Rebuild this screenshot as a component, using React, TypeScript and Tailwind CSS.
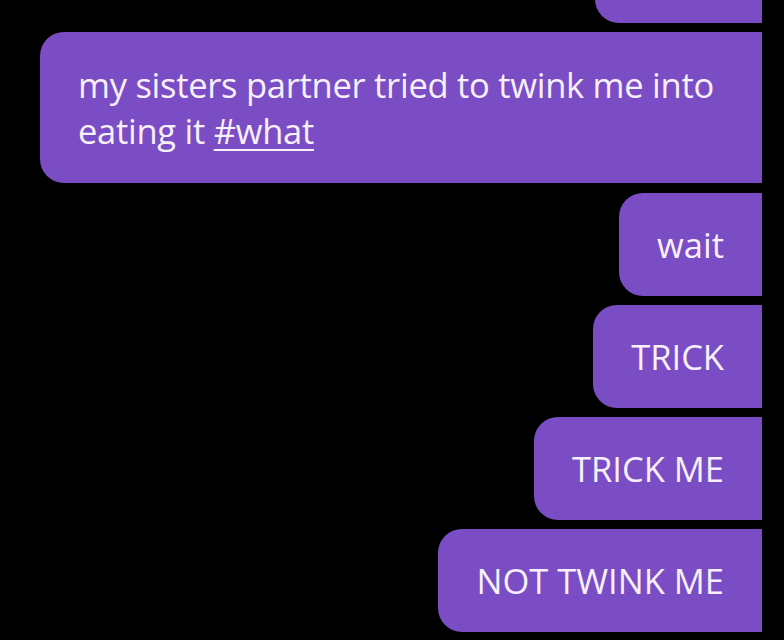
import React from "react";

const font = { fontFamily: '"Open Sans", "Noto Sans", sans-serif' };

function Bubble({ children }: { children: React.ReactNode }) {
  return (
    <div className="flex h-[103px] items-center rounded-l-[24px] bg-[#7a4dc5] pl-[38px] pr-[38px] text-[34.5px] leading-[46px] text-[#f7f0fb]">
      {children}
    </div>
  );
}

export default function App() {
  return (
    <div className="h-[640px] w-[784px] overflow-hidden bg-black" style={font}>
      <div className="flex flex-col items-end gap-[9px] pr-[22px]">
        <div className="-mt-[80px] h-[103px] w-[167px] rounded-l-[24px] bg-[#7a4dc5]" />
        <div className="w-[722px] rounded-l-[24px] bg-[#7a4dc5] pb-[29px] pl-[38px] pr-[20px] pt-[30px] text-[34.5px] leading-[46px] tracking-[-0.27px] text-[#f7f0fb]">
          <span className="whitespace-nowrap">my sisters partner tried to twink me into</span>
          <br />
          <span className="whitespace-nowrap">
            eating it{" "}
            <span className="underline decoration-[2px] underline-offset-[5px]">#what</span>
          </span>
        </div>
        <div className="mt-[1px]">
          <Bubble>wait</Bubble>
        </div>
        <Bubble>TRICK</Bubble>
        <Bubble>TRICK ME</Bubble>
        <Bubble>NOT TWINK ME</Bubble>
      </div>
    </div>
  );
}
